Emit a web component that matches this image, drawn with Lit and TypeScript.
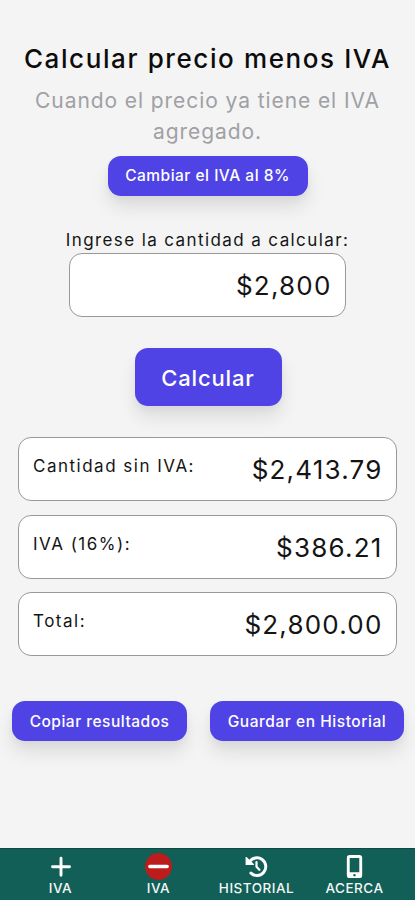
import { LitElement, html, css, svg } from "lit";
import { customElement } from "lit/decorators.js";

const plusIcon = svg`<path d="M12 3.2v17M3.5 11.7h17" stroke="#fff" stroke-width="2.9" stroke-linecap="round" fill="none"/>`;
const minusIcon = svg`<circle cx="12" cy="12" r="11.9" fill="#bd1c1c"/><path d="M4.3 12h15.4" stroke="#fff" stroke-width="3" stroke-linecap="round"/>`;
const historyIcon = svg`<path d="M4.7 7.2A9.2 9.2 0 1 1 6.2 18.9" stroke="#fff" stroke-width="3.1" stroke-linecap="round" fill="none"/><path d="M1.2 2.6v7.3h7.6z" fill="#fff" stroke="#fff" stroke-width="1.2" stroke-linejoin="round"/><path d="M12 7.3v5l3 3.1" stroke="#fff" stroke-width="2.3" stroke-linecap="round" stroke-linejoin="round" fill="none"/>`;
const phoneIcon = svg`<path fill="#fff" fill-rule="evenodd" d="M7 0h10a3 3 0 0 1 3 3v18a3 3 0 0 1-3 3H7a3 3 0 0 1-3-3V3a3 3 0 0 1 3-3zM7 3v15h10V3zM12 19.7a1.3 1.3 0 1 0 0 2.6 1.3 1.3 0 0 0 0-2.6z"/>`;

@customElement("app-root")
export class AppRoot extends LitElement {
  static styles = css`
    :host {
      display: flex;
      flex-direction: column;
      box-sizing: border-box;
      height: 900px;
      background: #f4f4f4;
      color: #141414;
      font-family: Inter, sans-serif;
      white-space: nowrap;
    }
    main {
      flex: 1;
      display: flex;
      flex-direction: column;
      align-items: center;
    }
    h1 {
      margin: 42px 0 0;
      font-size: 26px;
      line-height: 34px;
      font-weight: 500;
      letter-spacing: 1.6px;
      color: #0c0c0c;
    }
    .sub {
      margin: 9px 0 0;
      font-size: 21px;
      line-height: 31px;
      letter-spacing: 0.92px;
      color: #a0a0a5;
      text-align: center;
    }
    button {
      box-sizing: border-box;
      border: 0;
      padding: 1px 0 0;
      border-radius: 13px;
      background: #4f43e5;
      color: #fff;
      font: 500 15.5px/20px Inter, sans-serif;
      height: 40px;
      white-space: nowrap;
      box-shadow: 0 12px 18px rgba(0, 0, 0, 0.09), 0 4px 7px rgba(0, 0, 0, 0.04);
    }
    .rate { width: 200px; margin-top: 9px; padding-top: 0; letter-spacing: 0.5px; }
    .label {
      margin-top: 33px;
      font-size: 17px;
      line-height: 22px;
      letter-spacing: 1.4px;
    }
    .box {
      box-sizing: border-box;
      display: flex;
      height: 64px;
      border: 1px solid #999;
      border-radius: 13px;
      background: #fff;
    }
    .field {
      width: 277px;
      margin: 2px 0 0;
      padding: 1px 13.5px 0 0;
      justify-content: flex-end;
    }
    .value { font-size: 26px; line-height: 62px; letter-spacing: 1.2px; }
    .calc {
      width: 147px;
      height: 58px;
      margin: 31px 0 0 1px;
      padding-top: 1px;
      font-size: 22px;
      letter-spacing: 0.85px;
    }
    .results {
      display: flex;
      flex-direction: column;
      gap: 14px;
      width: 379px;
      margin-top: 31px;
    }
    .row { padding: 0 13.5px 0 14px; justify-content: space-between; }
    .row .value { padding-top: 1px; }
    .row:nth-child(n + 2) { margin-top: -0.3px; }
    .name { font-size: 17px; line-height: 20px; padding-top: 18px; letter-spacing: 1.5px; }
    .actions { display: flex; gap: 23px; margin: 44.6px 0 0 1px; }
    .copy { width: 175px; letter-spacing: 0.5px; }
    .save { width: 194px; letter-spacing: 0.55px; }
    nav {
      box-sizing: border-box;
      height: 52px;
      display: grid;
      grid-template-columns: repeat(4, 98px);
      justify-content: center;
      background: #125f57;
      border-top: 1px solid #0d4943;
      color: #f2f7f6;
    }
    .tab { display: flex; flex-direction: column; align-items: center; padding-top: 4px; }
    .icon { height: 27px; display: flex; align-items: center; }
    .tab-name { font-size: 13.5px; line-height: 16px; font-weight: 500; letter-spacing: 0.5px; }
  `;

  private results = [
    { name: "Cantidad sin IVA:", value: "$2,413.79" },
    { name: "IVA (16%):", value: "$386.21" },
    { name: "Total:", value: "$2,800.00" },
  ];

  private tabs = [
    { name: "IVA", icon: plusIcon, size: 24 },
    { name: "IVA", icon: minusIcon, size: 27 },
    { name: "HISTORIAL", icon: historyIcon, size: 23 },
    { name: "ACERCA", icon: phoneIcon, size: 23 },
  ];

  render() {
    return html`
      <main>
        <h1>Calcular precio menos IVA</h1>
        <p class="sub">Cuando el precio ya tiene el IVA<br />agregado.</p>
        <button class="rate">Cambiar el IVA al 8%</button>
        <div class="label">Ingrese la cantidad a calcular:</div>
        <div class="box field"><span class="value">$2,800</span></div>
        <button class="calc">Calcular</button>
        <section class="results">
          ${this.results.map(
            (r) => html`<div class="box row"><span class="name">${r.name}</span><span class="value">${r.value}</span></div>`
          )}
        </section>
        <div class="actions">
          <button class="copy">Copiar resultados</button>
          <button class="save">Guardar en Historial</button>
        </div>
      </main>
      <nav>
        ${this.tabs.map(
          (t) => html`<div class="tab">
            <span class="icon"><svg width=${t.size} height=${t.size} viewBox="0 0 24 24">${t.icon}</svg></span>
            <span class="tab-name">${t.name}</span>
          </div>`
        )}
      </nav>
    `;
  }
}
